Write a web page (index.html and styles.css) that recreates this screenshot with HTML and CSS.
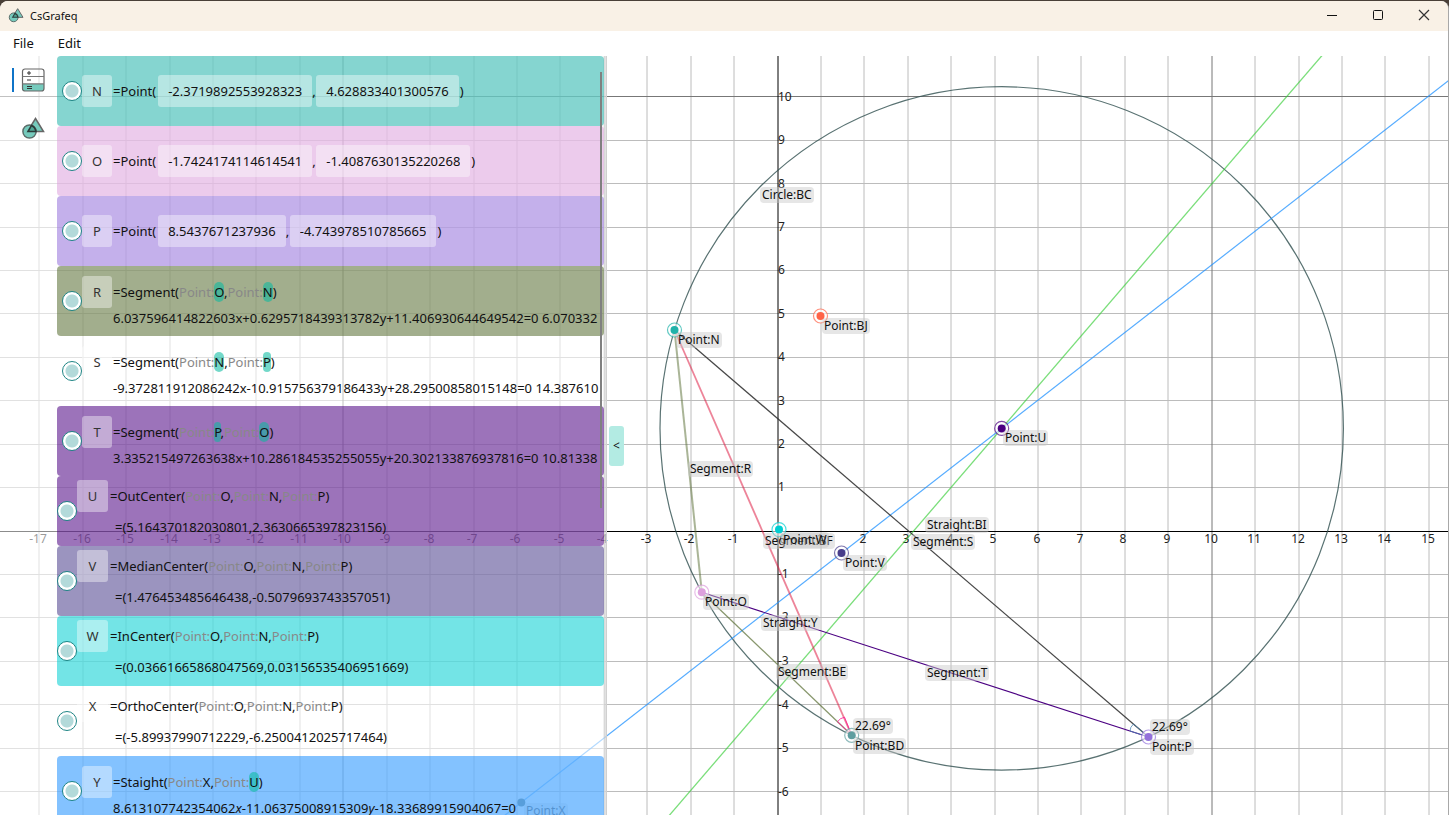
FILE: index.html
```html
<!DOCTYPE html>
<html lang="en">
<head>
<meta charset="utf-8">
<title>CsGrafeq</title>
<link rel="stylesheet" href="styles.css">
</head>
<body>
<svg class="defs" width="0" height="0" aria-hidden="true">
  <defs>
    <symbol id="shapes" viewBox="0 0 24 24">
      <path d="M14.500 2.500L22.500 15.500H6.500Z" fill="#76cbbd" stroke="#666" stroke-width="1.500"/>
      <circle cx="8.500" cy="15.500" r="6.600" fill="#76cbbd" stroke="#5c6e6b" stroke-width="1.500"/>
      <path d="M7 15.500L10.500 9.400Q14.200 11 15 15.500Z" fill="#4fa695" stroke="#2c3b39" stroke-width="1.600"/>
    </symbol>
  </defs>
</svg>
<div class="window">
  <header class="titlebar">
    <svg class="app-icon"><use href="#shapes"/></svg>
    <h1 class="app-name">CsGrafeq</h1>
    <div class="window-buttons">
      <button class="window-button" aria-label="Minimize"><svg width="12" height="12"><path d="M1 6.500H11" stroke="#111"/></svg></button>
      <button class="window-button" aria-label="Maximize"><svg width="12" height="12"><rect x="1.500" y="1.500" width="9" height="9" rx="1" fill="none" stroke="#111"/></svg></button>
      <button class="window-button" aria-label="Close"><svg width="12" height="12"><path d="M1 1L11 11M11 1L1 11" stroke="#333" stroke-width="1.200"/></svg></button>
    </div>
  </header>
  <nav class="menubar">
    <button class="menu-item">File</button>
    <button class="menu-item">Edit</button>
  </nav>
  <main class="workspace">
    <div class="chart">
      <svg class="plot" aria-label="Graph">
        <g transform="translate(0 -56)" fill="none">
          <path class="grid" d="M39 56v2000M83 56v2000M126 56v2000M170 56v2000M213 56v2000M256 56v2000M300 56v2000M387 56v2000M430 56v2000M474 56v2000M517 56v2000M560 56v2000M604 56v2000M647 56v2000M691 56v2000M734 56v2000M821 56v2000M864 56v2000M908 56v2000M951 56v2000M995 56v2000M1038 56v2000M1081 56v2000M1125 56v2000M1168 56v2000M1255 56v2000M1299 56v2000M1342 56v2000M1385 56v2000M1429 56v2000"/>
          <path class="grid" d="M0 140.500h3000M0 183.500h3000M0 227.500h3000M0 270.500h3000M0 313.500h3000M0 357.500h3000M0 400.500h3000M0 444.500h3000M0 487.500h3000M0 574.500h3000M0 617.500h3000M0 661.500h3000M0 704.500h3000M0 748.500h3000M0 791.500h3000"/>
          <path class="grid-major" d="M343 56v2000M1212 56v2000M0 96.500h3000"/>
          <path class="axis" d="M778 56v2000M0 531.500h3000"/>
          <g class="tick tick-x">
            <text x="38" y="543">-17</text><text x="82" y="543">-16</text><text x="125" y="543">-15</text><text x="169" y="543">-14</text><text x="212" y="543">-13</text><text x="255" y="543">-12</text><text x="299" y="543">-11</text><text x="342" y="543">-10</text><text x="385" y="543">-9</text><text x="429" y="543">-8</text><text x="472" y="543">-7</text><text x="515" y="543">-6</text><text x="559" y="543">-5</text><text x="602" y="543">-4</text><text x="646" y="543">-3</text><text x="689" y="543">-2</text><text x="733" y="543">-1</text><text x="783" y="543">0</text><text x="820" y="543">1</text><text x="863" y="543">2</text><text x="906" y="543">3</text><text x="950" y="543">4</text><text x="993" y="543">5</text><text x="1037" y="543">6</text><text x="1080" y="543">7</text><text x="1123" y="543">8</text><text x="1167" y="543">9</text><text x="1211" y="543">10</text><text x="1254" y="543">11</text><text x="1298" y="543">12</text><text x="1341" y="543">13</text><text x="1384" y="543">14</text><text x="1428" y="543">15</text>
          </g>
          <g class="tick">
            <text x="778" y="101">10</text><text x="778" y="144">9</text><text x="778" y="188">8</text><text x="778" y="231">7</text><text x="778" y="274">6</text><text x="778" y="318">5</text><text x="778" y="361">4</text><text x="778" y="405">3</text><text x="778" y="448">2</text><text x="778" y="491">1</text><text x="778" y="578">-1</text><text x="778" y="621">-2</text><text x="778" y="665">-3</text><text x="778" y="709">-4</text><text x="778" y="752">-5</text><text x="778" y="796">-6</text>
          </g>
          <circle cx="1001.700" cy="428.400" r="341.700" stroke="#2f4f4f" stroke-opacity=".8" stroke-width="1.200"/>
          <path d="M1515.500 28.400L441 865" stroke="#1e90ff" stroke-opacity=".75" stroke-width="1.200"/>
          <path d="M1356 16L634.400 856" stroke="#32cd32" stroke-opacity=".65" stroke-width="1.300"/>
          <path d="M674.500 330L1148.500 737" stroke="#333" stroke-opacity=".9" stroke-width="1.200"/>
          <path d="M701.800 592.200L1148.500 737" stroke="#4b0082" stroke-width="1.100"/>
          <path d="M674.500 330L701.800 592.200" stroke="#556b2f" stroke-opacity=".5" stroke-width="2"/>
          <path d="M701.800 592.200L851.700 735.300" stroke="#556b2f" stroke-opacity=".7" stroke-width="1.300"/>
          <path d="M674.500 330L851.700 735.300" stroke="#dc143c" stroke-opacity=".52" stroke-width="1.800"/>
          <path d="M851.700 735.300L837.500 721.700Q840 718 844.500 717.200L851.700 735.300" stroke="#ff1493" stroke-opacity=".8"/>
          <path d="M1148.500 737L1130 731Q1130 727 1133.500 724L1148.500 737" stroke="#4682b4" stroke-opacity=".75"/>
          <g class="point" color="#20b2aa"><circle cx="674.500" cy="330" r="7"/><circle class="dot" cx="674.500" cy="330" r="4"/></g>
          <g class="point" color="#dda0dd"><circle cx="701.800" cy="592.200" r="7"/><circle class="dot" cx="701.800" cy="592.200" r="4"/></g>
          <g class="point" color="#9370db"><circle cx="1148.500" cy="737" r="7"/><circle class="dot" cx="1148.500" cy="737" r="4"/></g>
          <g class="point" color="#4b0082"><circle cx="1001.700" cy="428.400" r="7"/><circle class="dot" cx="1001.700" cy="428.400" r="4"/></g>
          <g class="point" color="#483d8b"><circle cx="841.500" cy="553" r="7"/><circle class="dot" cx="841.500" cy="553" r="4"/></g>
          <g class="point" color="#00ced1"><circle cx="779" cy="529.600" r="7"/><circle class="dot" cx="779" cy="529.600" r="4"/></g>
          <g class="point" color="#ff6347"><circle cx="820.500" cy="316" r="7"/><circle class="dot" cx="820.500" cy="316" r="4"/></g>
          <g class="point" color="#5f9ea0"><circle cx="851.700" cy="735.300" r="7"/><circle class="dot" cx="851.700" cy="735.300" r="4"/></g>
          <circle cx="521.300" cy="802.400" r="4" fill="#2f4f4f"/>
        </g>
      </svg>
      <span class="label" style="left:760px;top:131px">Circle:BC</span>
      <span class="label" style="left:822px;top:262px">Point:BJ</span>
      <span class="label" style="left:676px;top:276px">Point:N</span>
      <span class="label" style="left:1003px;top:374px">Point:U</span>
      <span class="label" style="left:688px;top:405px">Segment:R</span>
      <span class="label" style="left:925px;top:461px">Straight:BI</span>
      <span class="label" style="left:911px;top:478px">Segment:S</span>
      <span class="label" style="left:763px;top:477px">Segment:BF</span>
      <span class="label" style="left:781px;top:476px">Point:W</span>
      <span class="label" style="left:843px;top:499px">Point:V</span>
      <span class="label" style="left:703px;top:538px">Point:O</span>
      <span class="label" style="left:761px;top:559px">Straight:Y</span>
      <span class="label" style="left:776px;top:608px">Segment:BE</span>
      <span class="label" style="left:925px;top:609px">Segment:T</span>
      <span class="label" style="left:853px;top:662px">22.69°</span>
      <span class="label" style="left:853px;top:682px">Point:BD</span>
      <span class="label" style="left:1150px;top:663px">22.69°</span>
      <span class="label" style="left:1150px;top:683px">Point:P</span>
      <span class="label" style="left:524px;top:747px">Point:X</span>
    </div>
    <aside class="sidebar">
      <button class="tool tool-active" aria-label="Expressions">
        <svg width="24" height="24">
          <path d="M1 16H23V21Q23 23 21 23H3Q1 23 1 21Z" fill="#76cbbd"/>
          <rect x="1.500" y="1" width="21.500" height="22" rx="2.500" fill="none" stroke="#666" stroke-width="1.200"/>
          <path d="M1.500 8.500H23M1.500 15.800H23" stroke="#777" stroke-width="1.200"/>
          <path d="M6 5H10M8 3V7M6 12H10M6 18.500H11M6 20.500H11" stroke="#333"/>
        </svg>
      </button>
      <button class="tool" aria-label="Geometry"><svg width="24" height="24"><use href="#shapes"/></svg></button>
    </aside>
    <section class="objects" aria-label="Objects">
      <article class="card teal">
        <input type="checkbox" class="toggle" aria-label="Show N"><input class="name" value="N" aria-label="Name">
        <p class="point-line">=Point(<input class="coord" value="-2.3719892553928323" size="17" aria-label="x"><span class="comma">,</span><input class="coord" value="4.628833401300576" size="15" aria-label="y">)</p>
      </article>
      <article class="card plum">
        <input type="checkbox" class="toggle" aria-label="Show O"><input class="name" value="O" aria-label="Name">
        <p class="point-line">=Point(<input class="coord" value="-1.7424174114614541" size="17" aria-label="x"><span class="comma">,</span><input class="coord" value="-1.4087630135220268" size="17" aria-label="y">)</p>
      </article>
      <article class="card lilac">
        <input type="checkbox" class="toggle" aria-label="Show P"><input class="name" value="P" aria-label="Name">
        <p class="point-line">=Point(<input class="coord" value="8.5437671237936" size="13" aria-label="x"><span class="comma">,</span><input class="coord" value="-4.743978510785665" size="16" aria-label="y">)</p>
      </article>
      <article class="card line olive">
        <input type="checkbox" class="toggle" aria-label="Show R"><input class="name" value="R" aria-label="Name">
        <div class="formula"><p>=Segment(<i>Point:</i><mark>O</mark>,<i>Point:</i><mark>N</mark>)</p><p>6.037596414822603x+0.6295718439313782y+11.406930644649542=0 6.070332</p></div>
      </article>
      <article class="card line plain">
        <input type="checkbox" class="toggle" aria-label="Show S"><input class="name" value="S" aria-label="Name">
        <div class="formula"><p>=Segment(<i>Point:</i><mark>N</mark>,<i>Point:</i><mark>P</mark>)</p><p>-9.372811912086242x-10.915756379186433y+28.29500858015148=0 14.387610</p></div>
      </article>
      <article class="card line indigo">
        <input type="checkbox" class="toggle" aria-label="Show T"><input class="name" value="T" aria-label="Name">
        <div class="formula"><p>=Segment(<i>Point:</i><mark>P</mark>,<i>Point:</i><mark>O</mark>)</p><p>3.335215497263638x+10.286184535255055y+20.302133876937816=0 10.81338</p></div>
      </article>
      <article class="card center indigo">
        <input type="checkbox" class="toggle" aria-label="Show U"><input class="name" value="U" aria-label="Name">
        <div class="formula"><p>=OutCenter(<i>Point:</i>O,<i>Point:</i>N,<i>Point:</i>P)</p><p class="value">=(5.164370182030801,2.3630665397823156)</p></div>
      </article>
      <article class="card center slate">
        <input type="checkbox" class="toggle" aria-label="Show V"><input class="name" value="V" aria-label="Name">
        <div class="formula"><p>=MedianCenter(<i>Point:</i>O,<i>Point:</i>N,<i>Point:</i>P)</p><p class="value">=(1.476453485646438,-0.5079693743357051)</p></div>
      </article>
      <article class="card center cyan">
        <input type="checkbox" class="toggle" aria-label="Show W"><input class="name" value="W" aria-label="Name">
        <div class="formula"><p>=InCenter(<i>Point:</i>O,<i>Point:</i>N,<i>Point:</i>P)</p><p class="value">=(0.03661665868047569,0.03156535406951669)</p></div>
      </article>
      <article class="card center plain">
        <input type="checkbox" class="toggle" aria-label="Show X"><input class="name" value="X" aria-label="Name">
        <div class="formula"><p>=OrthoCenter(<i>Point:</i>O,<i>Point:</i>N,<i>Point:</i>P)</p><p class="value">=(-5.89937990712229,-6.2500412025717464)</p></div>
      </article>
      <article class="card line blue">
        <input type="checkbox" class="toggle" aria-label="Show Y"><input class="name" value="Y" aria-label="Name">
        <div class="formula"><p>=Staight(<i>Point:</i>X,<i>Point:</i><mark>U</mark>)</p><p>8.613107742354062<em>x</em>-11.06375008915309<em>y</em>-18.33689915904067=0</p></div>
      </article>
      <div class="scrollbar"></div>
    </section>
    <div class="splitter"></div>
    <button class="collapse" aria-label="Collapse panel">&lt;</button>
  </main>
</div>
</body>
</html>
```
FILE: styles.css
```css
* { box-sizing: border-box; }

body {
  margin: 0;
  height: 100vh;
  overflow: hidden;
  background: #4a4038;
  font-family: "Noto Sans", "Open Sans", sans-serif;
  font-size: 13px;
  color: #111;
}

button, input { font: inherit; color: inherit; border: 0; padding: 0; margin: 0; }
button { background: none; }
p, h1 { margin: 0; }
svg { display: block; }
.defs { position: absolute; }

.window {
  display: flex;
  flex-direction: column;
  height: calc(100vh - 1px);
  margin-top: 1px;
  border: solid #a8a8a8;
  border-width: 0 1px 0 0;
  border-radius: 8px 8px 0 0;
  background: #fff;
  overflow: hidden;
}

.titlebar {
  display: flex;
  align-items: center;
  height: 30px;
  padding: 0 12px 2px 8px;
  background: #f9f1e6;
}
.app-icon { width: 16px; height: 16px; margin-right: 6px; }
.app-name { font-size: 11px; font-weight: 400; }
.window-buttons { display: flex; margin-left: auto; gap: 22px; }
.window-button {
  display: flex;
  align-items: center;
  justify-content: center;
  width: 24px;
  height: 28px;
}

.menubar { display: flex; gap: 24px; height: 25px; padding: 0 13px 2px; }

.workspace {
  position: relative;
  display: flex;
  flex: 1;
  min-height: 0;
  overflow: hidden;
}
.chart { position: absolute; inset: 0; overflow: hidden; }
.plot { width: 100%; height: 100%; }
.grid { stroke: #bcbcbc; }
.grid-major { stroke: #777; }
.axis { stroke: #000; }
.tick text { font-size: 12px; fill: #222; }
.tick-x { text-anchor: middle; }
.point circle { stroke: currentColor; stroke-opacity: .7; fill: #fff; fill-opacity: .6; stroke-width: 1.2px; }
.point .dot { fill: currentColor; fill-opacity: 1; stroke: none; }
.label {
  position: absolute;
  padding: 0 2px;
  border-radius: 4px;
  background: rgba(200, 200, 200, .45);
  font-size: 12px;
  line-height: 16px;
  white-space: nowrap;
}

.sidebar {
  position: relative;
  display: flex;
  flex-direction: column;
  gap: 24px;
  width: 57px;
  padding-top: 12px;
  background: rgba(255, 255, 255, .55);
}
.tool { display: flex; padding-left: 7px; margin-left: 12px; border-left: 2px solid transparent; }
.tool-active { border-color: #0f74c8; }

.objects {
  position: relative;
  width: 547px;
  overflow: hidden;
  background: rgba(255, 255, 255, .55);
}
.card {
  display: flex;
  align-items: center;
  height: 70px;
  padding-left: 5px;
  border-radius: 4px;
  white-space: nowrap;
}
.teal { background: rgba(32, 178, 170, .55); }
.plum { background: rgba(221, 160, 221, .55); }
.lilac { background: rgba(147, 112, 219, .55); }
.olive { background: rgba(85, 107, 47, .55); }
.indigo { background: rgba(75, 0, 130, .55); }
.slate { background: rgba(72, 61, 139, .55); }
.cyan { background: rgba(0, 206, 209, .55); }
.blue { background: rgba(30, 144, 255, .55); }

.toggle {
  appearance: none;
  flex: none;
  width: 20px;
  height: 20px;
  border: 1px solid #1f8585;
  border-radius: 50%;
  background: radial-gradient(circle, #b3dada 6px, #fff 7px);
}
.name {
  flex: none;
  width: 30px;
  height: 32px;
  border-radius: 3px;
  background: rgba(255, 255, 255, .4);
  text-align: center;
  color: #333;
}
.point-line { display: flex; align-items: center; padding-left: 1px; }
.coord {
  field-sizing: content;
  height: 32px;
  margin-left: 2px;
  padding: 0 10px;
  border-radius: 3px;
  background: rgba(255, 255, 255, .4);
}
.comma { width: 2px; }
.coord:last-of-type { margin-right: 1px; }

.line .name, .center .name { align-self: flex-start; }
.line .name { margin-top: 10px; }
.center { padding-left: 0; }
.center .name { width: 31px; margin-top: 4px; }
.formula { align-self: flex-start; padding-left: 1px; line-height: 26px; }
.line .formula { padding-top: 13px; }
.center .formula { padding: 5px 0 0 2px; line-height: 31px; }
.value { padding-left: 5px; }
i { font-style: normal; color: #888; }
mark { padding: 1px 0; border-radius: 5px; background: rgba(9, 187, 160, .57); color: inherit; }

.scrollbar {
  position: absolute;
  top: 16px;
  right: 2px;
  width: 2px;
  height: 436px;
  background: #808080;
}
.splitter { position: relative; width: 3px; background: rgba(215, 215, 215, .75); border-right: 1px solid #d0d0d0; }
.collapse {
  position: relative;
  align-self: center;
  width: 15px;
  height: 40px;
  margin: 20px 0 0 2px;
  border-radius: 3px;
  background: #b3ebe3;
  font-size: 12px;
}
```
